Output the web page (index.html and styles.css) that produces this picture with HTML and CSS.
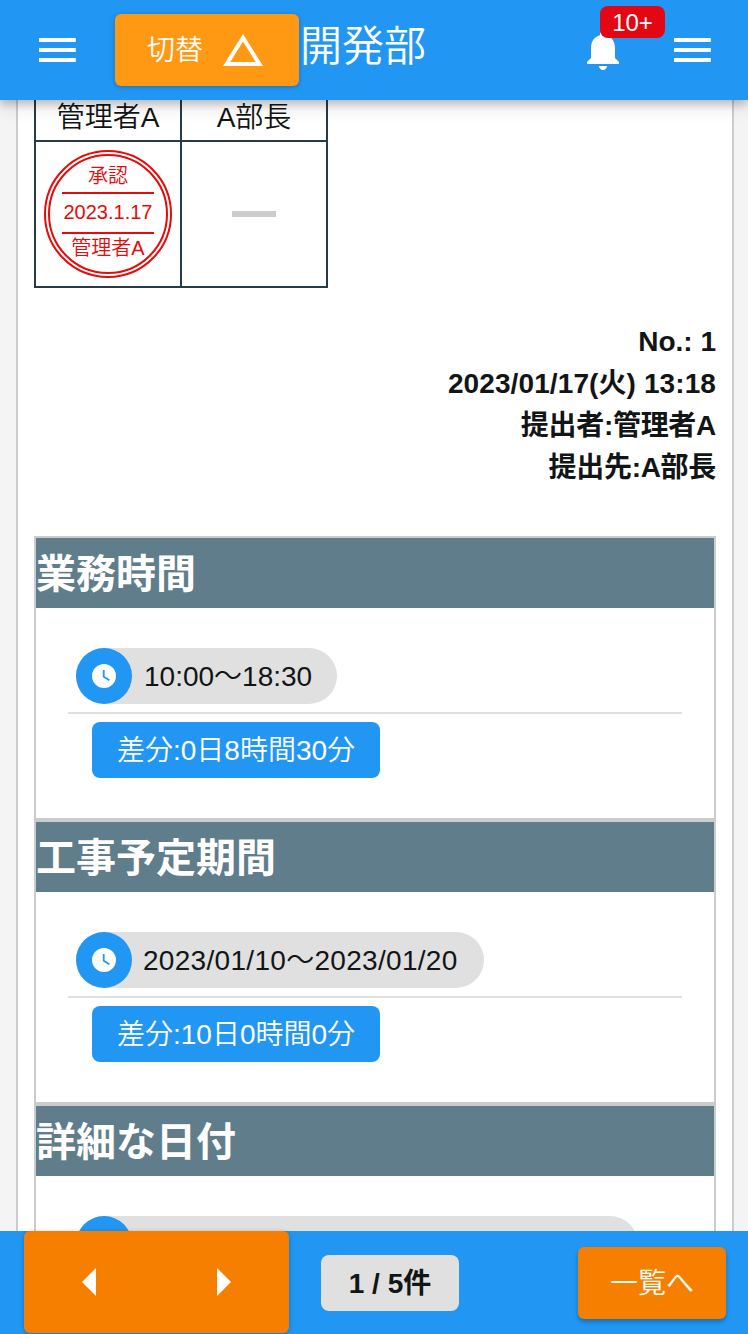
FILE: index.html
```html
<!DOCTYPE html>
<html lang="ja">
<head>
<meta charset="utf-8">
<title>開発部</title>
<link rel="stylesheet" href="styles.css">
</head>
<body>
<header class="topbar">
  <svg class="icon menu" viewBox="0 0 24 24"><path d="M3 18h18.4v-2H3v2zm0-5h18.4v-2H3v2zm0-7v2h18.4V6H3z"/></svg>
  <button class="btn switch"><span>切替</span>
    <svg class="triangle" viewBox="0 0 40 32"><path d="M20 0 40 32H0zM20 7.5 7.3 28H32.7z" fill-rule="evenodd"/></svg>
  </button>
  <h1 class="title">開発部</h1>
  <div class="notify">
    <svg class="icon" viewBox="0 0 24 24"><path d="M12 22c1.1 0 2-.9 2-2h-4c0 1.1.9 2 2 2zm6-6v-5c0-3.07-1.64-5.64-4.5-6.32V4c0-.83-.67-1.5-1.5-1.5s-1.5.67-1.5 1.5v.68C7.63 5.36 6 7.92 6 11v5l-2 2v1h16v-1l-2-2z"/></svg>
    <span class="badge">10+</span>
  </div>
  <svg class="icon menu-right" viewBox="0 0 24 24"><path d="M3 18h18.4v-2H3v2zm0-5h18.4v-2H3v2zm0-7v2h18.4V6H3z"/></svg>
</header>
<main class="content">
  <article class="paper">
    <div class="approvals">
      <div class="name">管理者A</div>
      <div class="name">A部長</div>
      <div class="cell">
        <div class="stamp"><span>承認</span><span class="stamp-date">2023.1.17</span><span class="stamp-name">管理者A</span></div>
      </div>
      <div class="cell"><i class="dash"></i></div>
    </div>
    <div class="meta">
      <div>No.: 1</div>
      <div class="submitted">2023/01/17(火) 13:18</div>
      <div class="person">提出者:管理者A</div>
      <div class="person">提出先:A部長</div>
    </div>
    <section class="panel">
      <h2>業務時間</h2>
      <div class="body">
        <div class="row"><div class="chip"><span class="avatar"><svg viewBox="0 0 24 24"><path d="M12 0a12 12 0 1 0 0 24 12 12 0 0 0 0-24zm-1.2 6h1.8v6.3l5.2 3.1-.9 1.5-6.1-3.7z"/></svg></span><span class="value">10:00～18:30</span></div></div>
        <div class="diff">差分:0日8時間30分</div>
      </div>
    </section>
    <section class="panel">
      <h2>工事予定期間</h2>
      <div class="body">
        <div class="row"><div class="chip dates"><span class="avatar"><svg viewBox="0 0 24 24"><path d="M12 0a12 12 0 1 0 0 24 12 12 0 0 0 0-24zm-1.2 6h1.8v6.3l5.2 3.1-.9 1.5-6.1-3.7z"/></svg></span><span class="value">2023/01/10～2023/01/20</span></div></div>
        <div class="diff">差分:10日0時間0分</div>
      </div>
    </section>
    <section class="panel">
      <h2>詳細な日付</h2>
      <div class="body">
        <div class="row"><div class="chip long"><span class="avatar"></span></div></div>
      </div>
    </section>
  </article>
</main>
<footer class="bottombar">
  <div class="btn pager">
    <svg viewBox="0 0 14 28"><path d="M14 0v28L0 14z"/></svg>
    <svg viewBox="0 0 14 28"><path d="M0 0v28l14-14z"/></svg>
  </div>
  <div class="count">1 / 5件</div>
  <button class="btn list">一覧へ</button>
</footer>
</body>
</html>
```
FILE: styles.css
```css
* { box-sizing: border-box; }
body {
  margin: 0;
  width: 748px;
  height: 1334px;
  overflow: hidden;
  display: flex;
  flex-direction: column;
  background: #f4f4f4;
  color: #111516;
  font: 350 28px/42px "Liberation Sans", "Noto Sans CJK JP", sans-serif;
}
h1, h2 { margin: 0; }
svg { display: block; fill: #fff; flex: none; }
.icon { width: 48px; height: 48px; }
.btn {
  border: 0;
  border-radius: 6px;
  color: #fff;
  font: inherit;
  padding: 0;
  display: flex;
  align-items: center;
  box-shadow: 0 1px 4px rgba(0, 0, 0, .25);
}

.topbar {
  position: relative;
  z-index: 1;
  flex: none;
  height: 100px;
  display: flex;
  align-items: center;
  background: #2196f3;
  color: #fff;
  box-shadow: 0 4px 8px rgba(0, 0, 0, .2), 0 8px 16px rgba(0, 0, 0, .1);
}
.menu { margin-left: 33px; }
.switch {
  margin-left: 34px;
  width: 184px;
  height: 72px;
  padding-left: 32px;
  gap: 20px;
  background: #ff9914;
}
.switch span { padding-top: 1px; }
.triangle { width: 40px; height: 32px; }
.title {
  margin-left: 1px;
  padding-bottom: 6px;
  font-size: 42px;
  font-weight: 350;
  line-height: 60px;
}
.notify { position: relative; margin-left: auto; }
.badge {
  position: absolute;
  left: 21.5px;
  top: -20px;
  width: 65px;
  height: 32px;
  border-radius: 8px;
  background: #e30713;
  font-size: 24px;
  line-height: 33px;
  text-align: center;
}
.menu-right { margin: 0 32px 0 41.5px; }

.content { flex: 1; min-height: 0; overflow: hidden; padding: 0 14px 0 16px; }
.paper {
  height: 1300px;
  padding: 0 16px;
  background: #fff;
  border: solid #ccc;
  border-width: 0 2px;
}
.approvals {
  width: 294px;
  height: 188px;
  display: grid;
  grid-template: 40px 144px / 144px 144px;
  gap: 2px;
  padding: 0 2px 2px;
  background: #263b45;
}
.name { background: #fff; text-align: center; line-height: 36px; }
.cell { background: #fff; display: flex; align-items: center; justify-content: center; }
.stamp {
  width: 128px;
  height: 128px;
  border: 6px double #e60a0a;
  border-radius: 50%;
  color: #e60a0a;
  font-size: 20px;
  display: flex;
  flex-direction: column;
  align-items: center;
  padding-top: 5px;
}
.stamp span { line-height: 31px; height: 31px; white-space: nowrap; }
.stamp .stamp-date {
  width: 92px;
  height: 42px;
  line-height: 37px;
  text-align: center;
  border: solid #e60a0a;
  border-width: 2px 0;
}
.stamp .stamp-name { line-height: 29px; }
.dash { width: 44px; height: 6px; background: #ccc; }

.meta {
  height: 248px;
  padding-top: 33px;
  text-align: right;
  font-weight: 700;
}
.submitted { letter-spacing: .1px; }
.person { letter-spacing: -.3px; }

.panel { height: 284px; border: 2px solid #ccc; }
.panel h2 {
  height: 70px;
  background: #607d8b;
  color: #fff;
  font-size: 40px;
  line-height: 72px;
}
.body { padding: 40px 32px; }
.row { padding: 0 8px 8px; border-bottom: 2px solid #e0e0e0; }
.chip {
  width: max-content;
  height: 56px;
  padding-right: 25px;
  border-radius: 28px;
  background: #e0e0e0;
  display: flex;
  align-items: center;
  gap: 12px;
}
.value { padding-top: 2px; }
.chip.dates { gap: 11px; letter-spacing: .3px; padding-right: 26px; }
.chip.long { width: 562px; }
.avatar {
  width: 56px;
  height: 56px;
  border-radius: 50%;
  background: #2196f3;
  display: flex;
  align-items: center;
  justify-content: center;
}
.avatar svg { width: 24px; height: 24px; }
.diff {
  width: 288px;
  height: 56px;
  margin: 8px 0 0 24px;
  border-radius: 8px;
  background: #2196f3;
  color: #fff;
  line-height: 58px;
  text-align: center;
}

.bottombar {
  position: relative;
  flex: none;
  height: 103px;
  display: flex;
  align-items: flex-start;
  background: #2196f3;
}
.pager {
  width: 265px;
  height: 102px;
  margin-left: 24px;
  padding: 0 58px;
  justify-content: space-between;
  background: #f77f00;
}
.pager svg { width: 14px; height: 28px; }
.count {
  width: 138px;
  height: 56px;
  margin: 24px 0 0 32px;
  border-radius: 8px;
  background: #e0e0e0;
  font-weight: 700;
  line-height: 58px;
  text-align: center;
}
.list {
  width: 148px;
  height: 72px;
  margin: 16px 22px 0 auto;
  padding-top: 2px;
  justify-content: center;
  background: #f77f00;
  box-shadow: 0 3px 4px rgba(0, 0, 0, .25);
}
```
